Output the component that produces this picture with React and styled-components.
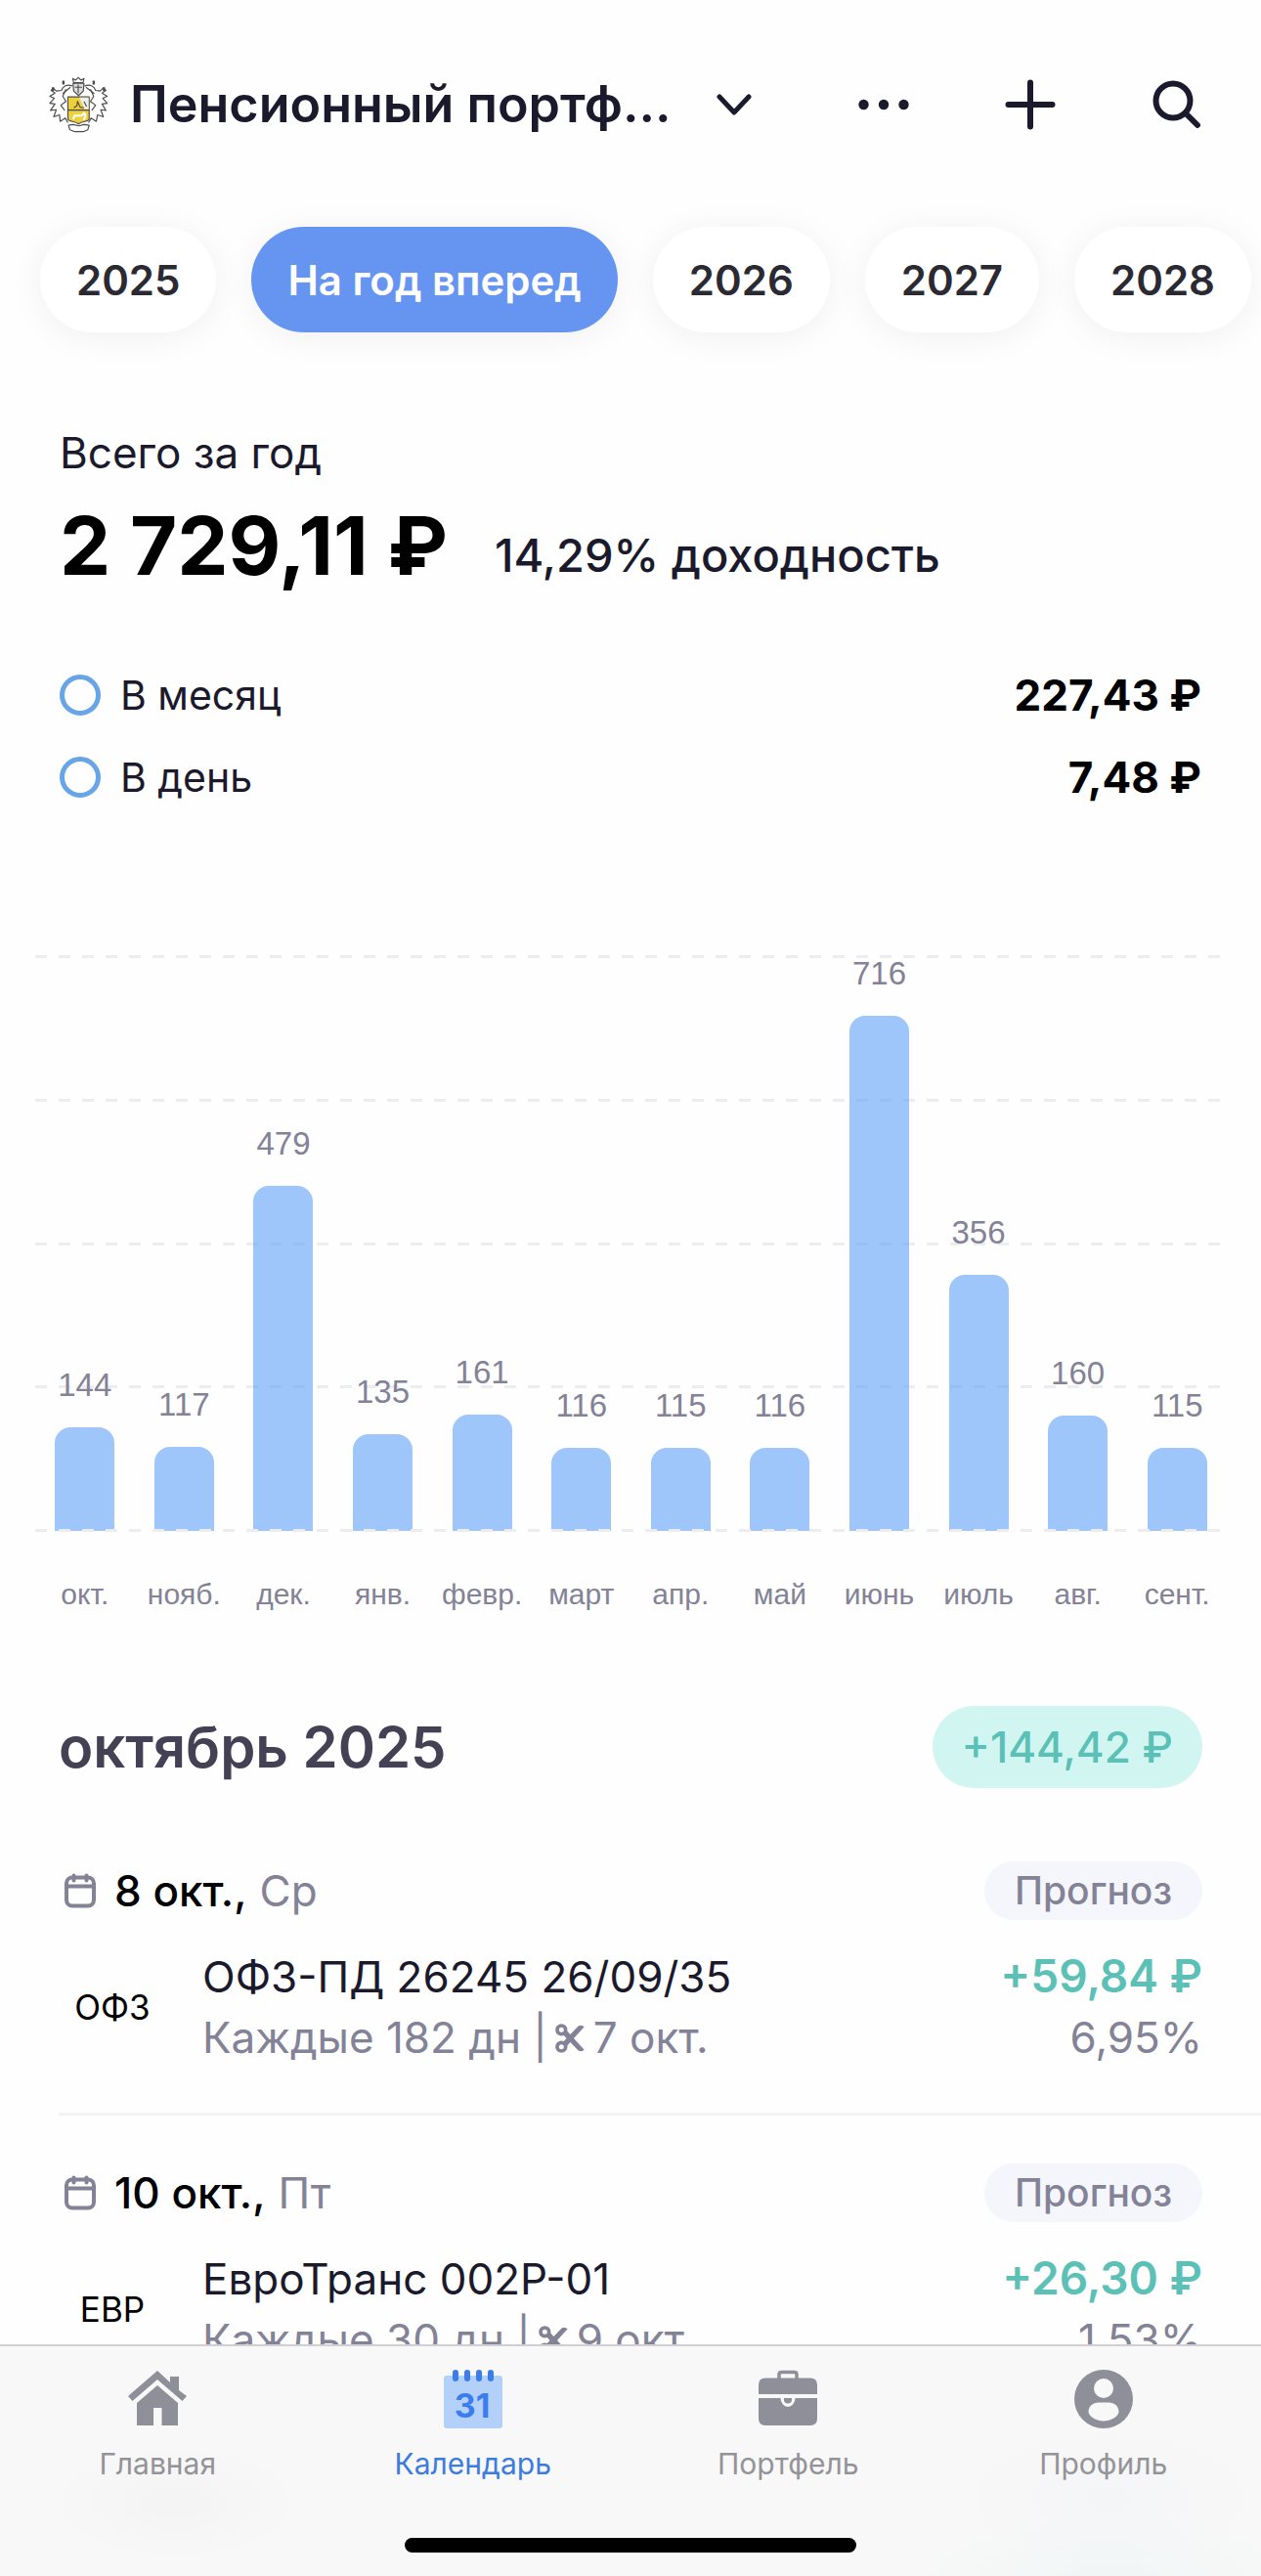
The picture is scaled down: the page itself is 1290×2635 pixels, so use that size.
import React, { useState } from 'react';
import styled, { createGlobalStyle } from 'styled-components';

const INK = '#1b1a2c';
const MUTED = '#838296';
const GREEN = '#5bc0b6';
const BLUE = '#6595f1';
const CHART_MAX = 800;

const GlobalStyle = createGlobalStyle`
  * {
    box-sizing: border-box;
  }

  body {
    margin: 0;
    background: #fefefe;
    font-family: Inter, 'Noto Sans', sans-serif;
    color: ${INK};
  }

  button {
    border: 0;
    margin: 0;
    padding: 0;
    background: none;
    font: inherit;
    color: inherit;
    cursor: pointer;
  }

  h1, h2, p {
    margin: 0;
    font-weight: inherit;
  }
`;

const Screen = styled.div`
  display: flex;
  flex-direction: column;
  height: 100vh;
`;

const Content = styled.main`
  flex: 1;
  min-height: 0;
  overflow: hidden auto;
  scrollbar-width: none;
`;

/* header */

const Header = styled.header`
  display: flex;
  align-items: center;
  justify-content: space-between;
  padding: 62px 41px 0 48px;
`;

const Switcher = styled.button`
  display: flex;
  align-items: center;
  height: 90px;

  h1 {
    margin: 0 44px 0 21px;
    font-size: 52px;
    font-weight: 600;
    line-height: 64px;
    white-space: nowrap;
  }
`;

const Actions = styled.div`
  display: flex;
  gap: 60px;
`;

const IconButton = styled.button`
  display: flex;
  align-items: center;
  justify-content: center;
  width: 90px;
  height: 90px;
`;

/* period chips */

const Chips = styled.div`
  display: flex;
  gap: 36px;
  margin-top: 40px;
  padding: 40px 41px 60px;
  overflow-x: auto;
  scrollbar-width: none;
`;

const Chip = styled.button`
  flex: none;
  height: 108px;
  padding: 0 37px;
  border-radius: 54px;
  background: ${props => (props.$active ? BLUE : '#fff')};
  color: ${props => (props.$active ? '#fff' : '#2b2a33')};
  box-shadow: 0 4px 36px rgba(0, 0, 0, 0.06);
  font-size: 42px;
  font-weight: 600;
  white-space: nowrap;
`;

/* totals */

const Summary = styled.section`
  padding: 37px 61px 0;
`;

const Caption = styled.p`
  font-size: 44px;
  line-height: 52px;
`;

const Total = styled.div`
  display: flex;
  align-items: flex-end;
  gap: 48px;
  margin-top: 21px;

  strong {
    font-size: 83px;
    font-weight: 700;
    line-height: 96px;
    color: #000;
  }

  span {
    font-size: 47px;
    font-weight: 500;
    line-height: 76px;
  }
`;

const Averages = styled.div`
  display: flex;
  flex-direction: column;
  gap: 24px;
  margin-top: 75px;
`;

const Average = styled.label`
  display: flex;
  align-items: center;
  height: 60px;
  font-size: 41px;

  input {
    appearance: none;
    width: 42px;
    height: 42px;
    margin: 0 20px 0 0;
    border: 5px solid #68a5e6;
    border-radius: 50%;
  }

  input:checked {
    background: #68a5e6;
  }

  strong {
    margin-left: auto;
    font-size: 44px;
    font-weight: 700;
    color: #000;
  }
`;

/* chart */

const Chart = styled.section`
  margin-top: 152px;
  padding: 0 35px 0 36px;
  font-family: 'Liberation Sans', Arial, sans-serif;
  color: ${MUTED};
`;

const Plot = styled.div`
  display: grid;
  height: 590px;
`;

const GridLines = styled.div`
  grid-area: 1 / 1;
  display: flex;
  flex-direction: column;
  justify-content: space-between;
  margin-right: 6px;
`;

const GridLine = styled.div`
  height: 3px;
  background: repeating-linear-gradient(90deg, #ededf0 0 12px, transparent 12px 24px);

  &:last-child {
    z-index: 2;
  }
`;

const Bars = styled.div`
  grid-area: 1 / 1;
  z-index: 1;
  display: grid;
  grid-template-columns: repeat(12, 1fr);
  height: 589px;
`;

const BarSlot = styled.div`
  display: flex;
  flex-direction: column;
  align-items: center;
  justify-content: flex-end;
  height: 100%;
  font-size: 33px;
  line-height: 40px;
`;

const Bar = styled.div`
  flex: none;
  width: 60%;
  margin-top: 23px;
  border-radius: 16px 16px 0 0;
  background: rgba(93, 160, 247, 0.6);
`;

const Months = styled.div`
  display: grid;
  grid-template-columns: repeat(12, 1fr);
  margin-top: 46px;
  font-size: 30px;
  line-height: 36px;
  text-align: center;
`;

/* payments */

const MonthHead = styled.div`
  display: flex;
  align-items: center;
  justify-content: space-between;
  margin-top: 96px;
  padding: 0 60px;

  h2 {
    font-size: 58px;
    font-weight: 600;
    color: #434153;
  }
`;

const MonthSum = styled.span`
  padding: 0 30px;
  border-radius: 42px;
  background: #d1f6f1;
  color: ${GREEN};
  font-size: 44px;
  font-weight: 500;
  line-height: 84px;
`;

const Payment = styled.article`
  margin-left: 60px;
  padding: 49px 60px 46px 0;
  border-top: 3px solid #f3f3f5;

  &:first-of-type {
    padding-top: 72px;
    border-color: transparent;
  }
`;

const DateRow = styled.div`
  display: flex;
  align-items: center;
  height: 60px;
  font-size: 44px;
  color: ${MUTED};

  svg {
    margin: 0 18px 0 5px;
  }

  time {
    margin-right: 13px;
    color: #000;
    font-weight: 500;
  }
`;

const Tag = styled.span`
  margin-left: auto;
  padding: 0 31px;
  border-radius: 30px;
  background: #f4f6fb;
  font-size: 39px;
  font-weight: 500;
  line-height: 60px;
`;

const Holding = styled.div`
  display: grid;
  grid-template-columns: 110px 1fr auto;
  align-items: center;
  margin-top: 26px;
  font-size: 44px;
  line-height: 62px;
`;

const Ticker = styled.span`
  font-size: 35px;
  color: #000;
  text-align: center;
`;

const Info = styled.div`
  padding-left: 37px;
`;

const Figures = styled.div`
  text-align: right;

  strong {
    color: ${GREEN};
    font-size: 46px;
    font-weight: 600;
  }
`;

const Sub = styled.p`
  color: ${MUTED};

  svg {
    margin: 0 -4px;
  }
`;

/* bottom navigation */

const TabBar = styled.nav`
  flex: none;
  border-top: 2px solid #d0d0d2;
  background:
    radial-gradient(130px 60px at 180px 160px, rgba(0, 0, 0, 0.02), transparent),
    radial-gradient(150px 70px at 88% 155px, rgba(120, 140, 220, 0.03), transparent),
    radial-gradient(200px 60px at 88% 100%, rgba(90, 200, 185, 0.05), transparent),
    #f8f8f8;
`;

const Tabs = styled.div`
  display: grid;
  grid-template-columns: repeat(4, 1fr);
`;

const Tab = styled.a`
  display: flex;
  flex-direction: column;
  align-items: center;
  gap: 18px;
  padding-top: 24px;
  color: ${props => (props.$active ? '#3c7be0' : '#939398')};
  font-size: 30px;
  line-height: 36px;
  text-decoration: none;
`;

const HomeIndicator = styled.div`
  width: 462px;
  height: 15px;
  margin: 58px auto 24px;
  border-radius: 8px;
  background: #000;
`;

/* drawings */

const Emblem = () => (
  <svg width="64" height="58" viewBox="26 54 192 176" fill="none" stroke="#4b4b4b" strokeWidth="3.500" strokeLinejoin="round">
    <path d="M108 74l-3-13 9 5 8-8 9 8 9-5-3 13z" fill="#fff" />
    <path d="M104 84c-16-6-30 0-34 14l-16 2-10-10-6 8 12 8-16 10 14 6-14 16 16 2-14 20 18-2-8 22 18-6 2 20 16-10 8 14" fill="#fff" />
    <path d="M142 84c16-6 30 0 34 14l14 2 10-10 8 8-12 8 16 10-14 6 14 16-16 2 12 20-16-2 8 22-18-6-4 20-16-10-8 14" fill="#fff" />
    <path d="M84 94l-10 22 10 16-16 12 12 16M160 94l10 22-10 16 16 12-12 16" />
    <path d="M98 88l-24 20M146 88l26 20" />
    <path d="M44 88v12M76 68v12M170 68v12M202 88v12" strokeWidth="7" />
    <path d="M106 76h34l-2 24-15 14-15-14z" fill="#ddd" />
    <path d="M122 80v26M112 88h22" />
    <path d="M90 118h66v68c0 10-22 6-33 16-11-10-33-6-33-16z" fill="#ecd03c" />
    <path d="M126 120h28v37h-12z" fill="#eee" stroke="none" />
    <path d="M90 159h66" strokeWidth="4" />
    <path d="M108 152l10-6 2-14 8 18 12 2M140 132l8 16" />
    <path d="M106 188l5-12h22l8-8 4 8-6 14" stroke="#fff" strokeWidth="6" />
    <path d="M92 206l14-2 18 4 16-4 16 2-4 14-14 6h-26l-16-6z" fill="#fff" />
  </svg>
);

const Chevron = () => (
  <svg width="40" height="26" viewBox="0 0 40 26" fill="none" stroke={INK} strokeWidth="5" strokeLinecap="round" strokeLinejoin="round">
    <path d="M5 5l15 16L35 5" />
  </svg>
);

const Dots = () => (
  <svg width="52" height="12" viewBox="0 0 52 12" fill={INK}>
    <circle cx="5.5" cy="6" r="5.2" />
    <circle cx="26" cy="6" r="5.2" />
    <circle cx="46.5" cy="6" r="5.2" />
  </svg>
);

const Plus = () => (
  <svg width="52" height="52" viewBox="0 0 52 52" stroke={INK} strokeWidth="6" strokeLinecap="round">
    <path d="M26 3.5v45M3.5 26h45" />
  </svg>
);

const Search = () => (
  <svg width="50" height="50" viewBox="0 0 50 50" fill="none" stroke={INK} strokeWidth="6" strokeLinecap="round">
    <circle cx="21" cy="21" r="17.5" />
    <path d="M34 34l12 12" />
  </svg>
);

const DateIcon = () => (
  <svg width="34" height="36" viewBox="0 0 34 36" fill="none" stroke={MUTED} strokeWidth="4" strokeLinecap="round">
    <rect x="3" y="4.500" width="28" height="29" rx="6" />
    <path d="M3 13.500h28M10.500 2.500v5M23.500 2.500v5" />
  </svg>
);

const Scissors = () => (
  <svg width="30" height="30" viewBox="0 0 90 90" fill={MUTED}>
    <circle cx="19" cy="19" r="13" fill="none" stroke={MUTED} strokeWidth="11" />
    <circle cx="19" cy="71" r="13" fill="none" stroke={MUTED} strokeWidth="11" />
    <path d="M24 34L70 82q10 6 19-2L36 22z" />
    <path d="M24 56L70 8q10-6 19 2L36 68z" />
  </svg>
);

const HomeIcon = () => (
  <svg width="60" height="60" viewBox="0 0 60 60" fill="#8e8f98">
    <path d="M30 1L43 13V7h9v14l8 6-4.500 5L30 10 4.500 32 0 27z" />
    <path d="M30 16l21 18v23H34.500V39h-8.500v18H9V34z" />
  </svg>
);

const CalendarIcon = () => (
  <svg width="60" height="60" viewBox="0 0 60 60">
    <rect y="6" width="60" height="54" rx="3" fill="#b3d1f8" />
    <path d="M12 3v6M24 3v6M36 3v6M48 3v6" stroke="#3b7ded" strokeWidth="6" strokeLinecap="round" />
    <text x="29" y="49" textAnchor="middle" fill="#3b7ded" fontFamily="Inter, sans-serif" fontSize="34" fontWeight="700">31</text>
  </svg>
);

const BriefcaseIcon = () => (
  <svg width="60" height="60" viewBox="0 0 60 60" fill="#8e8f98">
    <path d="M21 10V5q0-2.500 2.500-2.500h13Q39 2.500 39 5v5" fill="none" stroke="#8e8f98" strokeWidth="3.500" />
    <path d="M7 8.500h46q7 0 7 7V25H0v-9.500q0-7 7-7z" />
    <path d="M0 29h22.500a7.500 9 0 0 0 15 0H60v21q0 7-7 7H7q-7 0-7-7z" />
    <path d="M26 29h8v1.500a4 4 0 0 1-8 0z" />
  </svg>
);

const ProfileIcon = () => (
  <svg width="60" height="60" viewBox="0 0 60 60">
    <circle cx="30" cy="30" r="30" fill="#8e8f98" />
    <circle cx="30" cy="19" r="10" fill="#f8f8f8" />
    <path d="M25 33.500h10c6 0 10.500 4 10.500 9.500 0 4-7 9.500-15.500 9.500S14.500 47 14.500 43c0-5.500 4.500-9.500 10.500-9.500z" fill="#f8f8f8" />
  </svg>
);

const periods = ['2025', 'На год вперед', '2026', '2027', '2028'];

const income = [
  ['окт.', 144],
  ['нояб.', 117],
  ['дек.', 479],
  ['янв.', 135],
  ['февр.', 161],
  ['март', 116],
  ['апр.', 115],
  ['май', 116],
  ['июнь', 716],
  ['июль', 356],
  ['авг.', 160],
  ['сент.', 115],
];

const payments = [
  { date: '8 окт.,', day: 'Ср', ticker: 'ОФЗ', name: 'ОФЗ-ПД 26245 26/09/35', every: 'Каждые 182 дн', cutoff: '7 окт.', sum: '+59,84 ₽', rate: '6,95%' },
  { date: '10 окт.,', day: 'Пт', ticker: 'ЕВР', name: 'ЕвроТранс 002Р-01', every: 'Каждые 30 дн', cutoff: '9 окт.', sum: '+26,30 ₽', rate: '1,53%' },
];

const tabs = [
  { title: 'Главная', icon: <HomeIcon /> },
  { title: 'Календарь', icon: <CalendarIcon />, active: true },
  { title: 'Портфель', icon: <BriefcaseIcon /> },
  { title: 'Профиль', icon: <ProfileIcon /> },
];

export default function App() {
  const [period, setPeriod] = useState('На год вперед');

  return (
    <Screen>
      <GlobalStyle />
      <Content>
        <Header>
          <Switcher>
            <Emblem />
            <h1>Пенсионный портф...</h1>
            <Chevron />
          </Switcher>
          <Actions>
            <IconButton aria-label='Ещё'><Dots /></IconButton>
            <IconButton aria-label='Добавить'><Plus /></IconButton>
            <IconButton aria-label='Поиск'><Search /></IconButton>
          </Actions>
        </Header>

        <Chips>
          {periods.map(item => (
            <Chip key={item} $active={item === period} onClick={() => setPeriod(item)}>{item}</Chip>
          ))}
        </Chips>

        <Summary>
          <Caption>Всего за год</Caption>
          <Total>
            <strong>2 729,11 ₽</strong>
            <span>14,29% доходность</span>
          </Total>
          <Averages>
            <Average>
              <input type='radio' name='average' />
              В месяц
              <strong>227,43 ₽</strong>
            </Average>
            <Average>
              <input type='radio' name='average' />
              В день
              <strong>7,48 ₽</strong>
            </Average>
          </Averages>
        </Summary>

        <Chart>
          <Plot>
            <GridLines>
              {[800, 600, 400, 200, 0].map(level => <GridLine key={level} />)}
            </GridLines>
            <Bars>
              {income.map(([month, value]) => (
                <BarSlot key={month}>
                  {value}
                  <Bar style={{ height: `${(value / CHART_MAX) * 100}%` }} />
                </BarSlot>
              ))}
            </Bars>
          </Plot>
          <Months>
            {income.map(([month]) => <span key={month}>{month}</span>)}
          </Months>
        </Chart>

        <MonthHead>
          <h2>октябрь 2025</h2>
          <MonthSum>+144,42 ₽</MonthSum>
        </MonthHead>
        {payments.map(item => (
          <Payment key={item.ticker}>
            <DateRow>
              <DateIcon />
              <time>{item.date}</time>
              {item.day}
              <Tag>Прогноз</Tag>
            </DateRow>
            <Holding>
              <Ticker>{item.ticker}</Ticker>
              <Info>
                <p>{item.name}</p>
                <Sub>{item.every} | <Scissors /> {item.cutoff}</Sub>
              </Info>
              <Figures>
                <strong>{item.sum}</strong>
                <Sub>{item.rate}</Sub>
              </Figures>
            </Holding>
          </Payment>
        ))}
      </Content>

      <TabBar>
        <Tabs>
          {tabs.map(tab => (
            <Tab key={tab.title} href='#' $active={tab.active}>
              {tab.icon}
              {tab.title}
            </Tab>
          ))}
        </Tabs>
        <HomeIndicator />
      </TabBar>
    </Screen>
  );
}
